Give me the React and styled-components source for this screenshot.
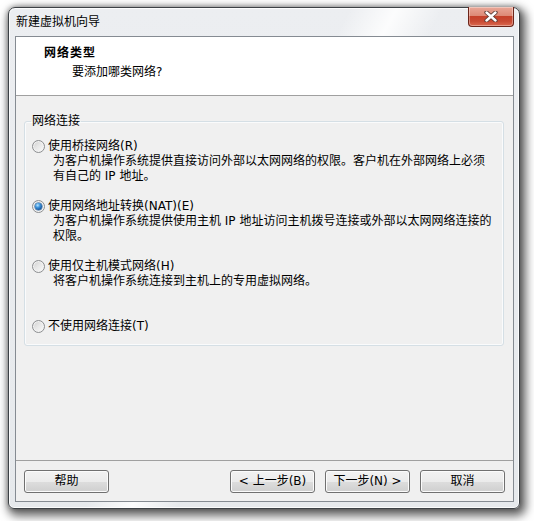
import React from 'react';
import styled, { createGlobalStyle } from 'styled-components';

const GlobalStyle = createGlobalStyle`
  html, body { margin: 0; padding: 0; background: #ffffff; }
  body {
    font-family: "DejaVu Sans", "Noto Sans CJK SC", sans-serif;
    font-size: 12px;
    color: #000;
  }
  * { box-sizing: border-box; }
`;

const Page = styled.div`
  width: 534px;
  height: 521px;
  padding: 7px 0 0 8px;
  overflow: hidden;
`;

const Window = styled.div`
  width: 512px;
  height: 502px;
  border: 1px solid #3d4145;
  border-radius: 7px 7px 6px 6px;
  background:
    linear-gradient(118deg,
      rgba(255,255,255,0) 0%,
      rgba(255,255,255,0) 44%,
      rgba(255,255,255,0.85) 50%,
      rgba(255,255,255,0) 56%,
      rgba(255,255,255,0) 100%),
    linear-gradient(180deg, #eceef1 0%, #e6e9ec 100%);
  box-shadow:
    inset 0 0 0 1px rgba(255,255,255,0.8),
    3px 4px 10px 3px rgba(0,0,0,0.6),
    0 0 5px rgba(0,0,0,0.3);
  padding: 0 5px 6px 6px;
  display: flex;
  flex-direction: column;
`;

const TitleBar = styled.div`
  height: 28px;
  display: flex;
  align-items: flex-start;
`;

const Title = styled.div`
  padding: 6px 0 0 1px;
  line-height: 16px;
  font-size: 12px;
`;

const CloseButton = styled.div`
  margin-left: auto;
  margin-top: -1px;
  width: 46px;
  height: 20px;
  border: 1px solid #6b2419;
  border-top: none;
  border-radius: 0 0 4px 4px;
  background: linear-gradient(180deg,
    #e9a898 0%, #dd8a76 45%, #c5412a 50%, #c84a33 75%, #db6a50 100%);
  box-shadow: inset 0 0 0 1px rgba(255,255,255,0.35);
  display: flex;
  align-items: center;
  justify-content: center;
`;

const Client = styled.div`
  flex: 1;
  border: 1px solid #858b92;
  display: flex;
  flex-direction: column;
  background: #f0f0f0;
`;

const Header = styled.div`
  height: 59px;
  background: #ffffff;
  border-bottom: 1px solid #a0a0a0;
  padding: 8px 0 0 28px;
`;

const HeaderTitle = styled.div`
  font-weight: bold;
  line-height: 16px;
  letter-spacing: 1px;
`;

const HeaderSubtitle = styled.div`
  margin: 3px 0 0 28px;
  line-height: 16px;
`;

const Body = styled.div`
  flex: 1;
  padding: 17px 9px 0 8px;
`;

const GroupBox = styled.fieldset`
  margin: 0;
  height: 233px;
  border: 1px solid #d5dfe5;
  border-radius: 3px;
  box-shadow: inset 0 0 0 1px #fafbfc;
  padding: 10px 8px 0 7px;
`;

const GroupLegend = styled.legend`
  padding: 0 1px;
  margin-left: -1px;
  line-height: 16px;
`;

const Option = styled.div`
  display: grid;
  grid-template-columns: 13px 1fr;
  grid-auto-rows: 15px;
  align-content: start;
  column-gap: 3px;
  height: ${p => (p.$last ? 'auto' : '60px')};
`;

const Radio = styled.span`
  position: relative;
  width: 13px;
  height: 13px;
  margin-top: 1px;
  border-radius: 50%;
  border: 1px solid #8c8e90;
  background: linear-gradient(135deg, #cfcfcf 0%, #e6e6e6 45%, #fbfbfb 100%);
  box-shadow: inset 0 0 0 1px #f3f3f3;
  &::after {
    content: '';
    display: ${p => (p.$checked ? 'block' : 'none')};
    position: absolute;
    left: 2px;
    top: 2px;
    width: 7px;
    height: 7px;
    border-radius: 50%;
    background: radial-gradient(circle at 38% 32%, #b9e6ff 0%, #3f95dc 35%, #13529a 75%, #0b3b73 100%);
    box-shadow: 0 0 0 0.5px #2a5e96;
  }
`;

const OptionLabel = styled.div`
  line-height: 15px;
`;

const OptionDesc = styled.div`
  grid-column: 2;
  margin-left: 5px;
  line-height: 15px;
`;

const Footer = styled.div`
  height: 41px;
  border-top: 1px solid #a0a0a0;
  padding: 9px 8px 8px 8px;
  display: flex;
  gap: 10px;
`;

const Button = styled.button`
  width: 85px;
  height: 23px;
  padding: 0;
  margin: ${p => (p.$pushRight ? '0 auto 0 0' : '0')};
  border: 1px solid #707070;
  border-radius: 3px;
  background: linear-gradient(180deg, #f2f2f2 0%, #ebebeb 50%, #dddddd 51%, #cfcfcf 100%);
  box-shadow: inset 0 0 0 1px #fbfbfb;
  font-family: "DejaVu Sans", "Noto Sans CJK SC", sans-serif;
  font-size: 12px;
  line-height: 21px;
  color: #000;
`;

const CloseIcon = () => (
  <svg width="14" height="11" viewBox="0 0 14 11">
    <path d="M2.5 1.5 L11.5 9.5 M11.5 1.5 L2.5 9.5" stroke="#5a3a34" strokeWidth="4.2" strokeLinecap="round" fill="none" />
    <path d="M2.5 1.5 L11.5 9.5 M11.5 1.5 L2.5 9.5" stroke="#ffffff" strokeWidth="2.4" strokeLinecap="round" fill="none" />
  </svg>
);

const options = [
  {
    label: '使用桥接网络(R)',
    desc: ['为客户机操作系统提供直接访问外部以太网网络的权限。客户机在外部网络上必须', '有自己的 IP 地址。'],
  },
  {
    label: '使用网络地址转换(NAT)(E)',
    desc: ['为客户机操作系统提供使用主机 IP 地址访问主机拨号连接或外部以太网网络连接的', '权限。'],
    checked: true,
  },
  {
    label: '使用仅主机模式网络(H)',
    desc: ['将客户机操作系统连接到主机上的专用虚拟网络。'],
  },
  {
    label: '不使用网络连接(T)',
    desc: [],
    last: true,
  },
];

export default function App() {
  return (
    <Page>
      <GlobalStyle />
      <Window>
        <TitleBar>
          <Title>新建虚拟机向导</Title>
          <CloseButton>
            <CloseIcon />
          </CloseButton>
        </TitleBar>
        <Client>
          <Header>
            <HeaderTitle>网络类型</HeaderTitle>
            <HeaderSubtitle>要添加哪类网络?</HeaderSubtitle>
          </Header>
          <Body>
            <GroupBox>
              <GroupLegend>网络连接</GroupLegend>
              {options.map(o => (
                <Option key={o.label} $last={o.last}>
                  <Radio $checked={o.checked} />
                  <OptionLabel>{o.label}</OptionLabel>
                  {o.desc.map(d => (
                    <OptionDesc key={d}>{d}</OptionDesc>
                  ))}
                </Option>
              ))}
            </GroupBox>
          </Body>
          <Footer>
            <Button $pushRight>帮助</Button>
            <Button>&lt; 上一步(B)</Button>
            <Button>下一步(N) &gt;</Button>
            <Button>取消</Button>
          </Footer>
        </Client>
      </Window>
    </Page>
  );
}
